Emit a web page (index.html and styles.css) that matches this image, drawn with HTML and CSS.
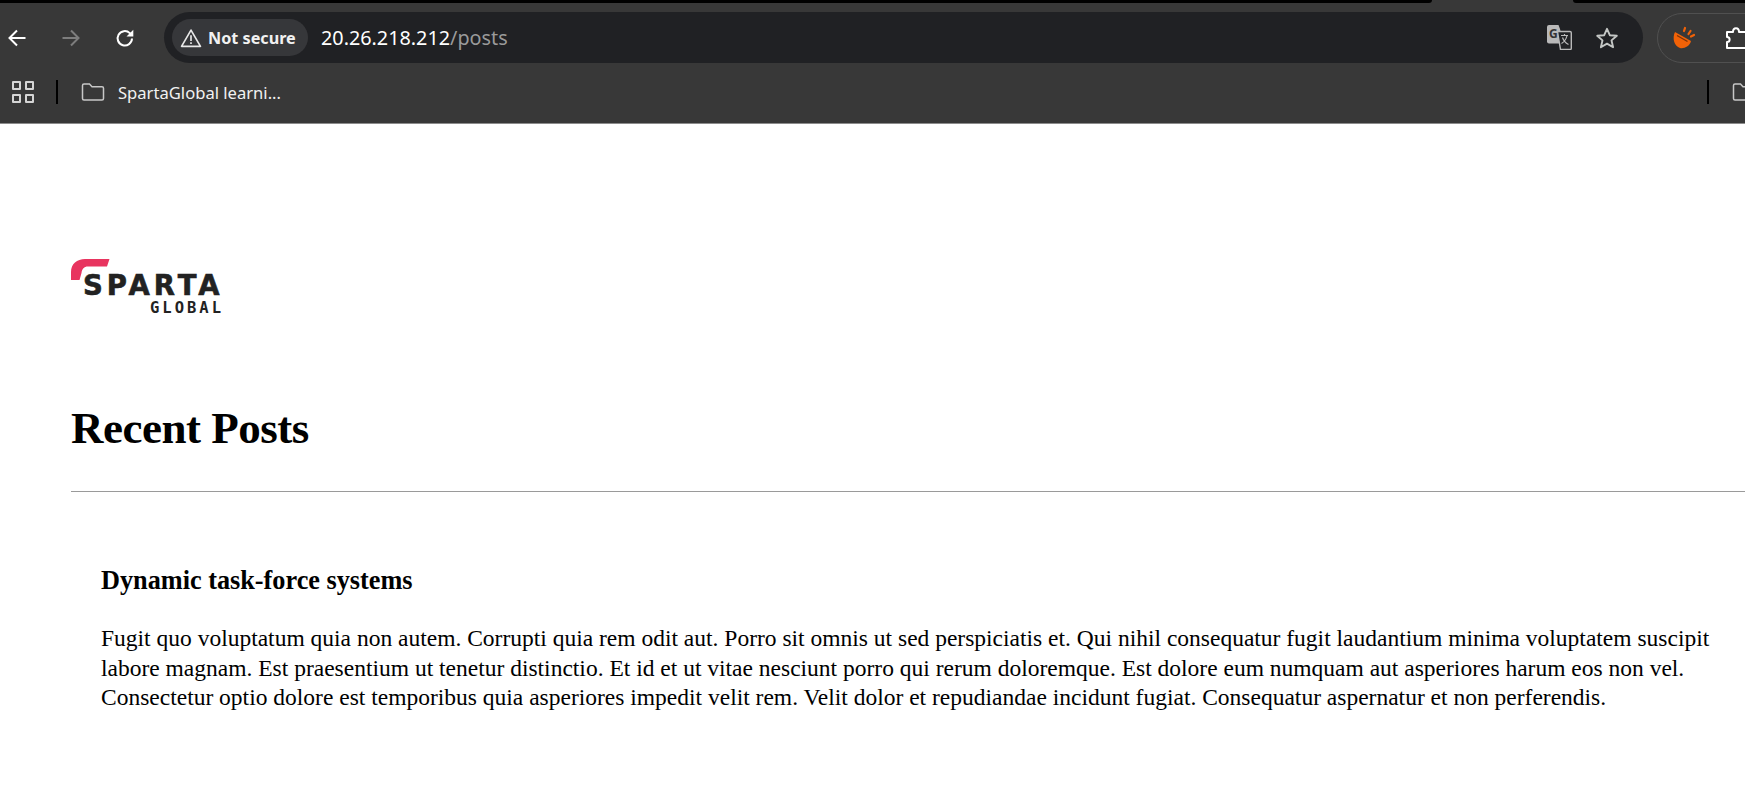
FILE: index.html
```html
<!DOCTYPE html>
<html lang="en">
<head>
    <meta charset="UTF-8">
    <title>Recent Posts</title>
    <link rel="stylesheet" href="styles.css">
</head>
<body>
    <div class="tabstrip">
        <div class="tab-left"></div>
        <div class="tab-right"></div>
    </div>

    <div class="toolbar">
        <div class="nav-btn">
            <svg width="20" height="20" viewBox="0 0 20 20"><path d="M18.500 10H2.500M10 2.500 2.500 10l7.500 7.500" fill="none" stroke="#fff" stroke-width="2"/></svg>
        </div>
        <div class="nav-btn">
            <svg width="20" height="20" viewBox="0 0 20 20"><path d="M1.500 10h16M10 2.500l7.500 7.500-7.500 7.500" fill="none" stroke="#7d7d7d" stroke-width="2"/></svg>
        </div>
        <div class="nav-btn">
            <svg width="20" height="20" viewBox="0 0 20 20"><path d="M17 10.500a7.200 7.200 0 1 1-2.200-5.400L17 7.300" fill="none" stroke="#fff" stroke-width="2"/><path d="M18.300 1.800v6.800h-6.800z" fill="#fff"/></svg>
        </div>
        <div class="omnibox">
            <div class="security-chip">
                <svg width="22" height="20" viewBox="0 0 20 18"><path d="M10 1.800 18.600 16.600H1.400z" fill="none" stroke="#e8e8e8" stroke-width="1.500" stroke-linejoin="round"/><path d="M10 6.600v5.200M10 12.800v1.700" stroke="#e8e8e8" stroke-width="1.500"/></svg>
                <span>Not secure</span>
            </div>
            <div class="url">20.26.218.212<span class="url-path">/posts</span></div>
            <div class="omni-icons">
                <svg width="25" height="25" viewBox="0 0 25 25"><path d="M2 0h9.500l1.500 4h0l3.500 14.500H2a2 2 0 0 1-2-2V2a2 2 0 0 1 2-2z" fill="#b9b9b9"/><path d="M10.500 6.500H23a1.300 1.300 0 0 1 1.300 1.300v15.400a1.300 1.300 0 0 1-1.300 1.300H13.500z" fill="#222326" stroke="#b9b9b9" stroke-width="1.400"/><text x="2" y="12.500" class="g-mark">G</text><path d="M14 10.500h7M17.500 9v1.500M20 10.500c-.8 4-3 6.500-5.500 8M15.500 12.500c1 3 3 5.500 6 7" fill="none" stroke="#b9b9b9" stroke-width="1.200"/></svg>
                <svg width="24" height="24" viewBox="0 0 24 24"><path d="M12 2.800l2.800 6.400 7 .6-5.300 4.600 1.600 6.800-6.100-3.600-6.100 3.600 1.600-6.800L2.200 9.800l7-.6z" fill="none" stroke="#c4c7c5" stroke-width="1.900" stroke-linejoin="round"/></svg>
            </div>
        </div>
        <div class="ext-group">
            <svg width="24" height="24" viewBox="0 0 24 24"><path d="M3 6 19 15C18 20 12 23 8 22 2 20 0 12 3 6z" fill="#f26207"/><path d="M5 9.500 15.500 15.500" stroke="#7a3208" stroke-width="1.200"/><path d="M13 2l-1 3M18.500 5l-2 3M22 9l-3 1.500" stroke="#f26207" stroke-width="2.200" stroke-linecap="round"/></svg>
            <svg class="ext-puzzle" width="24" height="24" viewBox="0 0 24 24"><path d="M2 6h6c0-5 6-5 6 0h9v16H2v-6c3.500 0 3.500-5 0-5z" fill="none" stroke="#fff" stroke-width="2" stroke-linejoin="round"/></svg>
        </div>
    </div>

    <div class="bookmarks">
        <div class="apps-icon"><span></span><span></span><span></span><span></span></div>
        <div class="bm-sep"></div>
        <svg class="folder" width="24" height="20" viewBox="0 0 24 20"><path d="M1.500 3.500a1.500 1.500 0 0 1 1.500-1.500h5.500l2.500 2.700h10a1.500 1.500 0 0 1 1.500 1.500v10.300a1.500 1.500 0 0 1-1.500 1.500H3a1.500 1.500 0 0 1-1.500-1.500z" fill="none" stroke="#c7c7c7" stroke-width="1.500"/></svg>
        <span class="bm-label">SpartaGlobal learni...</span>
        <div class="bm-right">
            <div class="bm-sep"></div>
            <svg class="folder-clip" width="24" height="20" viewBox="0 0 24 20"><path d="M1.500 3.500a1.500 1.500 0 0 1 1.500-1.500h5.500l2.500 2.700h10a1.500 1.500 0 0 1 1.500 1.500v10.300a1.500 1.500 0 0 1-1.500 1.500H3a1.500 1.500 0 0 1-1.500-1.500z" fill="none" stroke="#c7c7c7" stroke-width="1.500"/></svg>
        </div>
    </div>

    <div class="page">
        <div class="logo">
            <svg class="logo-mark" width="39" height="21" viewBox="0 0 39 21"><path d="M0 21V13C0 5 6 0 14 0H38.500L36 7.500H17C13 7.500 11 10 10.500 14L8.500 21z" fill="#e8345f"/></svg>
            <div class="logo-name">SPARTA</div>
            <div class="logo-sub">GLOBAL</div>
        </div>

        <h1>Recent Posts</h1>
        <hr>

        <div class="post">
            <h3>Dynamic task-force systems</h3>
            <p>Fugit quo voluptatum quia non autem. Corrupti quia rem odit aut. Porro sit omnis ut sed perspiciatis et. Qui nihil consequatur fugit laudantium minima voluptatem suscipit<br>labore magnam. Est praesentium ut tenetur distinctio. Et id et ut vitae nesciunt porro qui rerum doloremque. Est dolore eum numquam aut asperiores harum eos non vel.<br>Consectetur optio dolore est temporibus quia asperiores impedit velit rem. Velit dolor et repudiandae incidunt fugiat. Consequatur aspernatur et non perferendis.</p>
        </div>
    </div>
</body>
</html>
```

FILE: styles.css
```css
html, body {
    margin: 0;
    height: 100%;
    overflow: hidden;
}
body {
    background: #fff;
    font-family: "Noto Sans", Arial, sans-serif;
}

/* browser chrome */
.tabstrip {
    height: 3px;
    background: #383838;
    display: flex;
    justify-content: space-between;
}
.tab-left {
    width: 1432px;
    background: #000;
    border-bottom-right-radius: 8px;
}
.tab-right {
    width: 172px;
    background: #000;
    border-bottom-left-radius: 8px;
}
.toolbar {
    height: 69px;
    background: #383838;
    display: flex;
    align-items: center;
    overflow: hidden;
}
.nav-btn {
    width: 20px;
    height: 20px;
    flex-shrink: 0;
    margin-left: 7px;
    margin-right: 34px;
    display: flex;
}
.nav-btn + .nav-btn {
    margin-left: 0;
}
.nav-btn:nth-child(3) {
    margin-right: 29px;
}
.omnibox {
    width: 1479px;
    height: 51px;
    flex-shrink: 0;
    background: #202124;
    border-radius: 26px;
    display: flex;
    align-items: center;
    box-sizing: border-box;
    padding-left: 8px;
}
.security-chip {
    height: 37px;
    width: 136px;
    box-sizing: border-box;
    padding-left: 8px;
    background: #36373a;
    border-radius: 19px;
    display: flex;
    align-items: center;
    gap: 6px;
    color: #f1f1f1;
    font-size: 16.2px;
    font-weight: bold;
}
.url {
    margin-left: 13px;
    color: #fff;
    font-size: 19.8px;
}
.url-path {
    color: #9a9a9a;
}
.omni-icons {
    margin-left: auto;
    margin-right: 24px;
    display: flex;
    align-items: center;
    gap: 23px;
}
.g-mark {
    font-size: 12px;
    font-weight: bold;
    fill: #333;
}
.ext-group {
    width: 200px;
    height: 50px;
    margin-left: 14px;
    flex-shrink: 0;
    box-sizing: border-box;
    padding-left: 14px;
    border: 1px solid #505050;
    border-radius: 26px;
    display: flex;
    align-items: center;
    gap: 29px;
}
.ext-group svg {
    flex-shrink: 0;
}
.bookmarks {
    height: 52px;
    background: #383838;
    border-bottom: 1px solid #8c8c8c;
    box-sizing: border-box;
    padding: 0 0 11px 12px;
    display: flex;
    align-items: center;
    overflow: hidden;
}
.apps-icon {
    width: 22px;
    height: 22px;
    display: grid;
    grid-template-columns: 1fr 1fr;
    gap: 4px;
}
.apps-icon span {
    border: 2px solid #d5d5d5;
    border-radius: 1px;
}
.bm-sep {
    width: 2px;
    height: 24px;
    background: #000;
    margin-left: 22px;
}
.folder {
    margin-left: 23px;
}
.bm-label {
    margin-left: 13px;
    color: #f1f1f1;
    font-size: 16.6px;
}
.bm-right {
    margin-left: auto;
    width: 38px;
    flex-shrink: 0;
    display: flex;
    align-items: center;
    gap: 23px;
}
.bm-right .bm-sep {
    margin-left: 0;
    flex-shrink: 0;
}
.folder-clip {
    flex-shrink: 0;
}

/* page */
.page {
    padding: 0 0 0 71px;
    color: #000;
    font-family: "Liberation Serif", "Times New Roman", serif;
}
.logo {
    position: relative;
    width: 153px;
    margin-top: 135px;
    padding-top: 16px;
    color: #222;
}
.logo-mark {
    position: absolute;
    left: 0;
    top: 0;
}
.logo-name {
    padding-left: 12px;
    font-family: "DejaVu Sans", sans-serif;
    font-size: 27.5px;
    font-weight: bold;
    letter-spacing: 4px;
    line-height: 20px;
    white-space: nowrap;
    -webkit-text-stroke: 0.6px #222;
}
.logo-sub {
    margin-top: 7px;
    font-family: "DejaVu Sans Mono", monospace;
    font-size: 15.5px;
    font-weight: bold;
    letter-spacing: 3px;
    line-height: 12px;
    text-align: right;
}
h1 {
    margin: 86px 0 0;
    font-size: 45px;
    line-height: 56px;
    font-weight: bold;
    letter-spacing: -0.5px;
}
hr {
    margin: 35px 0 0;
    border: none;
    border-top: 1px solid #9a9a9a;
}
.post {
    padding: 0 0 0 30px;
}
h3 {
    margin: 74px 0 0;
    font-size: 26.25px;
    line-height: 30px;
    font-weight: bold;
}
p {
    margin: 28px 0 0;
    font-size: 23.5px;
    line-height: 29.5px;
    white-space: nowrap;
}
```
